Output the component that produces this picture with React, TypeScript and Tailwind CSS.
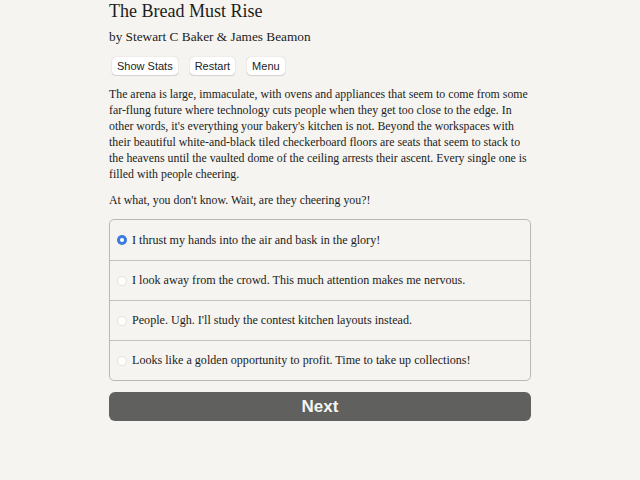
import { useState } from 'react';

// Passage view: title, byline, toolbar, story text, choice list and Next button

const serif = { fontFamily: '"Palatino Linotype", "Book Antiqua", "Liberation Serif", serif' };

const choices = [
  'I thrust my hands into the air and bask in the glory!',
  'I look away from the crowd. This much attention makes me nervous.',
  "People. Ugh. I'll study the contest kitchen layouts instead.",
  'Looks like a golden opportunity to profit. Time to take up collections!',
];

export default function App() {
  const [picked, setPicked] = useState(0);

  return (
    <div className="min-h-[480px] w-full bg-[#f5f4f0] text-[#1c1c1c]">
      <div className="mx-auto w-[422px]" style={serif}>
        <h1 className="text-[18px] leading-[22px]">The Bread Must Rise</h1>
        <p className="mt-[5px] text-[13.3px] leading-[20px]">by Stewart C Baker &amp; James Beamon</p>

        <div className="mt-[10px] flex gap-[12px] pl-[3px] font-['Liberation_Sans',sans-serif]">
          {['Show Stats', 'Restart', 'Menu'].map((b) => (
            <button
              key={b}
              className="h-[18px] rounded-[4px] bg-white px-[5px] text-[11px] leading-[18px] text-[#222] shadow-[0_0_1px_rgba(0,0,0,0.3),0_1px_1px_rgba(0,0,0,0.12)]"
            >
              {b}
            </button>
          ))}
        </div>

        <div className="mt-[11px] space-y-[10px] whitespace-nowrap text-[11.85px] leading-[16px]">
          <p>
            The arena is large, immaculate, with ovens and appliances that seem to come from some
            <br />
            far-flung future where technology cuts people when they get too close to the edge. In
            <br />
            other words, it's everything your bakery's kitchen is not. Beyond the workspaces with
            <br />
            their beautiful white-and-black tiled checkerboard floors are seats that seem to stack to
            <br />
            the heavens until the vaulted dome of the ceiling arrests their ascent. Every single one is
            <br />
            filled with people cheering.
          </p>
          <p>At what, you don't know. Wait, are they cheering you?!</p>
        </div>

        <div className="mt-[11px] overflow-hidden rounded-[5px] border border-[#b9b8b5]">
          {choices.map((c, i) => (
            <label
              key={c}
              className={`flex h-[40px] cursor-pointer items-center gap-[5px] pl-[7px] text-[12.1px] ${
                i > 0 ? 'border-t border-[#c4c3c0]' : ''
              }`}
              onClick={() => setPicked(i)}
            >
              <span
                className={`flex h-[10px] w-[10px] shrink-0 items-center justify-center rounded-full ${
                  picked === i ? 'bg-[#3d7be0]' : 'border border-[#e4e3e0] bg-white'
                }`}
              >
                {picked === i && <span className="h-[4px] w-[4px] rounded-full bg-white" />}
              </span>
              <span>{c}</span>
            </label>
          ))}
        </div>

        <button className="mt-[11px] h-[29px] w-full rounded-[6px] bg-[#60605e] font-['Liberation_Sans',sans-serif] text-[17px] font-bold text-[#f5f5f5]">
          Next
        </button>
      </div>
    </div>
  );
}
